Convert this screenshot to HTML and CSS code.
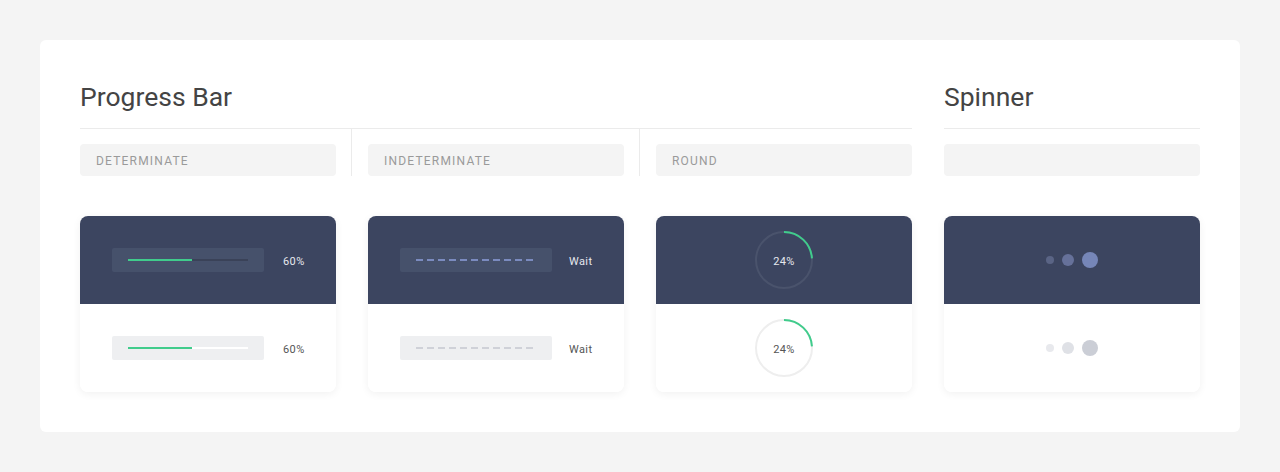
FILE: index.html
```html
<!DOCTYPE html>
<html lang="en">
<head>
<meta charset="utf-8">
<title>Progress</title>
<link rel="stylesheet" href="styles.css">
</head>
<body>
<main class="panel">
  <section class="section section-progress">
    <h2 class="heading">Progress Bar</h2>
    <div class="tabs">
      <div class="tab"><div class="label">DETERMINATE</div></div>
      <div class="tab"><div class="label">INDETERMINATE</div></div>
      <div class="tab"><div class="label">ROUND</div></div>
    </div>
    <div class="cards">
      <div class="card">
        <div class="half dark">
          <div class="bar-row">
            <div class="bar-box"><div class="track"><div class="fill" style="width:64px"></div></div></div>
            <span class="value">60%</span>
          </div>
        </div>
        <div class="half light">
          <div class="bar-row">
            <div class="bar-box"><div class="track"><div class="fill" style="width:64px"></div></div></div>
            <span class="value">60%</span>
          </div>
        </div>
      </div>
      <div class="card">
        <div class="half dark">
          <div class="bar-row">
            <div class="bar-box"><div class="dashes"></div></div>
            <span class="value wait">Wait</span>
          </div>
        </div>
        <div class="half light">
          <div class="bar-row">
            <div class="bar-box"><div class="dashes"></div></div>
            <span class="value wait">Wait</span>
          </div>
        </div>
      </div>
      <div class="card">
        <div class="half dark centered">
          <div class="round">
            <svg width="60" height="60" viewBox="0 0 60 60">
              <circle class="ring" cx="30" cy="30" r="28"/>
              <circle class="arc" cx="30" cy="30" r="28" stroke-dasharray="42.2 176" transform="rotate(-90 30 30)"/>
            </svg>
            <span class="round-text">24%</span>
          </div>
        </div>
        <div class="half light centered">
          <div class="round">
            <svg width="60" height="60" viewBox="0 0 60 60">
              <circle class="ring" cx="30" cy="30" r="28"/>
              <circle class="arc" cx="30" cy="30" r="28" stroke-dasharray="42.2 176" transform="rotate(-90 30 30)"/>
            </svg>
            <span class="round-text">24%</span>
          </div>
        </div>
      </div>
    </div>
  </section>
  <section class="section section-spinner">
    <h2 class="heading">Spinner</h2>
    <div class="tabs">
      <div class="tab"><div class="label"></div></div>
    </div>
    <div class="cards">
      <div class="card">
        <div class="half dark centered">
          <div class="dots"><span class="dot d1"></span><span class="dot d2"></span><span class="dot d3"></span></div>
        </div>
        <div class="half light centered">
          <div class="dots"><span class="dot d1"></span><span class="dot d2"></span><span class="dot d3"></span></div>
        </div>
      </div>
    </div>
  </section>
</main>
</body>
</html>
```

FILE: styles.css
```css
* { box-sizing: border-box; }

html, body {
  margin: 0;
  padding: 0;
}

body {
  background: #f4f4f4;
  font-family: Roboto, "Liberation Sans", sans-serif;
  color: #444;
  padding: 40px;
}

.panel {
  background: #fff;
  border-radius: 6px;
  padding: 40px;
  display: grid;
  grid-template-columns: 832px 256px;
  column-gap: 32px;
  height: 392px;
}

.heading {
  margin: 0;
  font-weight: 400;
  font-size: 26.5px;
  line-height: 34px;
  color: #444;
  padding-bottom: 14px;
  border-bottom: 1px solid #ebebeb;
}

.tabs {
  display: flex;
}

.tab {
  flex: none;
  width: 288px;
  padding: 15px 16px 0;
  border-right: 1px solid #ebebeb;
}

.tab:first-child { padding-left: 0; width: 272px; }
.tab:last-child { padding-right: 0; width: 272px; border-right: none; }
.tab:only-child { width: 256px; }

.label {
  width: 256px;
  height: 32px;
  background: #f4f4f4;
  border-radius: 4px;
  padding-left: 16px;
  padding-top: 1px;
  font-size: 12px;
  line-height: 32px;
  letter-spacing: 1.2px;
  color: #9a9a9a;
}

.cards {
  display: flex;
  gap: 32px;
  margin-top: 40px;
}

.card {
  width: 256px;
  height: 176px;
  border-radius: 8px;
  overflow: hidden;
  box-shadow: 0 2px 8px rgba(0, 0, 0, 0.06);
  display: flex;
  flex-direction: column;
}

.half {
  height: 88px;
  display: flex;
  align-items: center;
}

.half.dark { background: #3c4560; }
.half.light { background: #fff; }
.half.centered { justify-content: center; }

.bar-row {
  display: flex;
  align-items: center;
  padding-left: 32px;
}

.bar-box {
  width: 152px;
  height: 24px;
  border-radius: 2px;
  padding: 0 16px;
  display: flex;
  align-items: center;
}

.dark .bar-box { background: #46516b; }
.light .bar-box { background: #eeeff1; }

.track {
  width: 120px;
  height: 2px;
}

.dark .track { background: #3a4258; }
.light .track { background: #fff; }

.fill {
  height: 2px;
  background: #40cc8c;
}

.dashes {
  width: 117px;
  height: 2px;
}

.dark .dashes { background: repeating-linear-gradient(90deg, #7b8bbf 0 7px, transparent 7px 11px); }
.light .dashes { background: repeating-linear-gradient(90deg, #cfd1d8 0 7px, transparent 7px 11px); }

.value {
  font-size: 11px;
  letter-spacing: 0.4px;
  margin-left: 19px;
  padding-top: 2px;
}

.value.wait { margin-left: 17px; }

.dark .value, .dark .round-text { color: #e6e8ee; }
.light .value, .light .round-text { color: #555; }

.round {
  position: relative;
  width: 60px;
  height: 60px;
  display: flex;
  align-items: center;
  justify-content: center;
}

.round svg {
  position: absolute;
  left: 0;
  top: 0;
}

.ring { fill: none; stroke-width: 2; }
.dark .ring { stroke: #4a536c; }
.light .ring { stroke: #eeeeee; }

.arc { fill: none; stroke-width: 2; stroke: #40cc8c; }

.round-text {
  position: relative;
  font-size: 11px;
  letter-spacing: 0.4px;
  padding-top: 2px;
}

.dots {
  display: flex;
  align-items: center;
  gap: 8px;
}

.dot {
  display: block;
  border-radius: 50%;
}

.d1 { width: 8px; height: 8px; }
.d2 { width: 12px; height: 12px; }
.d3 { width: 16px; height: 16px; }

.dark .d1 { background: #5a6485; }
.dark .d2 { background: #66719a; }
.dark .d3 { background: #7686b8; }
.light .d1 { background: #e8e9ed; }
.light .d2 { background: #dfe1e6; }
.light .d3 { background: #cbced6; }
```
